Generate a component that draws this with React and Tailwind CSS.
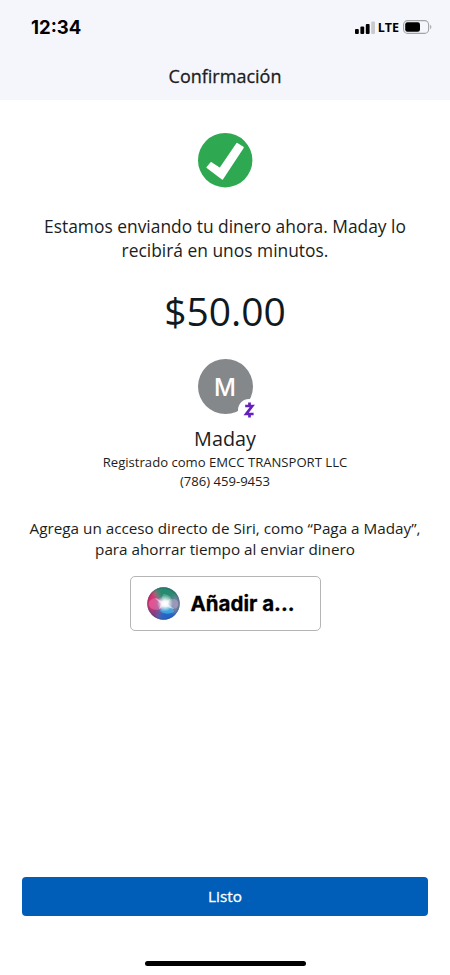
function Signal() {
  return (
    <svg className="h-[13px] w-5" viewBox="0 0 20 13">
      <rect x="0" y="8" width="3.8" height="5" rx="1" fill="#000" />
      <rect x="5.4" y="5.6" width="3.8" height="7.4" rx="1" fill="#000" />
      <rect x="10.8" y="3" width="3.8" height="10" rx="1" fill="#000" />
      <rect x="16.2" y="0.4" width="3.8" height="12.6" rx="1" fill="#c9cacd" />
    </svg>
  );
}

function Battery() {
  return (
    <svg className="h-[14px] w-[29px]" viewBox="0 0 29 14">
      <rect x="0.6" y="0.6" width="25" height="12.8" rx="4" fill="none" stroke="#a2a3a6" strokeWidth="1.1" />
      <rect x="2.2" y="2.2" width="14.8" height="9.6" rx="2.2" fill="#000" />
      <path d="M27.2 4.8c1.6.7 1.6 3.7 0 4.4z" fill="#a2a3a6" />
    </svg>
  );
}

function Success() {
  return (
    <svg className="h-[55px] w-[55px]" viewBox="0 0 55 55">
      <circle cx="27.2" cy="27.2" r="27.2" fill="#2fa951" />
      <path d="M9.2 34.4L13.2 29.8L22 35.6L39 10.6L45 14.5L24.4 45.8Z" fill="#fff" stroke="#fff" strokeWidth="1.6" strokeLinejoin="round" />
    </svg>
  );
}

function Zelle() {
  return (
    <svg className="absolute top-[40px] left-[40px] h-[22px] w-[22px]" viewBox="0 0 22 22">
      <circle cx="11" cy="11" r="11" fill="#fff" />
      <path d="M7.2 7H14.2L8.2 15H15.6M11.5 3.4V7M11.5 15V18.6" fill="none" stroke="#6420bd" strokeWidth="2.7" strokeLinejoin="miter" />
    </svg>
  );
}

function Siri() {
  return (
    <svg className="h-[33px] w-[33px] shrink-0" viewBox="0 0 33 33">
      <defs>
        <clipPath id="orb"><circle cx="16.5" cy="16.5" r="16.2" /></clipPath>
        <filter id="soft" x="-50%" y="-50%" width="200%" height="200%"><feGaussianBlur stdDeviation="2.6" /></filter>
        <filter id="edge" x="-30%" y="-30%" width="160%" height="160%"><feGaussianBlur stdDeviation="0.6" /></filter>
        <radialGradient id="glow">
          <stop offset="0" stopColor="#fff" />
          <stop offset="0.35" stopColor="#fff" stopOpacity="0.9" />
          <stop offset="1" stopColor="#fff" stopOpacity="0" />
        </radialGradient>
        <radialGradient id="rim">
          <stop offset="0.85" stopColor="#273055" stopOpacity="0" />
          <stop offset="1" stopColor="#273055" stopOpacity="0.3" />
        </radialGradient>
      </defs>
      <g clipPath="url(#orb)">
        <rect width="33" height="33" fill="#5b80a5" />
        <g filter="url(#soft)">
          <ellipse cx="20" cy="4" rx="14" ry="8" fill="#278a70" />
          <ellipse cx="3" cy="14" rx="7" ry="12" fill="#d62f70" />
          <ellipse cx="8" cy="27" rx="7" ry="6" fill="#8b3b7c" />
          <ellipse cx="20" cy="29" rx="10" ry="6" fill="#2065c6" />
          <ellipse cx="30" cy="17" rx="5" ry="8" fill="#7884a0" />
        </g>
        <g filter="url(#edge)">
          <ellipse cx="9.5" cy="17" rx="8" ry="6" fill="#f06daf" opacity="0.55" />
          <ellipse cx="26" cy="17" rx="5.5" ry="5" fill="#d5b6d9" opacity="0.4" />
          <path d="M16 17Q25 17 27 25Q19 29 13 24Z" fill="#43bdf0" opacity="0.65" />
          <path d="M17 17Q13 9 17 7Q25 8 25 15Z" fill="#7bc7af" opacity="0.5" />
          <path d="M8 11L17 15L23 12L21 17L27 22L17 19L12 22L14 17Z" fill="#fff" opacity="0.5" />
        </g>
        <circle cx="18" cy="16.5" r="8" fill="url(#glow)" />
        <circle cx="16.5" cy="16.5" r="16.3" fill="url(#rim)" />
      </g>
    </svg>
  );
}

export default function App() {
  return (
    <div className="flex h-[975px] w-[450px] flex-col overflow-hidden bg-white font-['Open_Sans','Noto_Sans',sans-serif] text-[#1b1d20]">
      <header className="h-[100px] shrink-0 bg-[#f5f6fb]">
        <div className="flex h-[54px] items-center justify-between pr-[18px] pl-[31px] text-black">
          <span className="font-['Inter',sans-serif] text-[18.5px] leading-6 font-bold">12:34</span>
          <div className="flex items-center">
            <Signal />
            <span className="mr-[4px] ml-[3px] pt-px text-[12.5px] leading-4 font-bold">LTE</span>
            <Battery />
          </div>
        </div>
        <h1 className="pt-[10px] text-center text-[18px] leading-6 [-webkit-text-stroke:0.3px_#1b1d20]">Confirmación</h1>
      </header>
      <main className="flex flex-col items-center whitespace-nowrap pt-[33px]">
        <Success />
        <p className="mt-[27px] text-center text-[17.4px] leading-[23.5px]">
          Estamos enviando tu dinero ahora. Maday lo<br />recibirá en unos minutos.
        </p>
        <p className="mt-[23px] text-[39px] leading-[52px] text-[#101820]">$50.00</p>
        <div className="relative mt-[22px] flex h-[55px] w-[55px] items-center justify-center rounded-full bg-[#85888b]">
          <span className="pt-[2px] font-['Inter',sans-serif] text-[24px] leading-none font-medium text-white">M</span>
          <Zelle />
        </div>
        <h2 className="mt-[11px] text-[19.8px] leading-7">Maday</h2>
        <p className="text-center text-[13.1px] leading-[19px]">
          Registrado como EMCC TRANSPORT LLC<br />(786) 459-9453
        </p>
        <p className="mt-[27px] text-center text-[15.25px] leading-[21px]">
          Agrega un acceso directo de Siri, como “Paga a Maday”,<br />para ahorrar tiempo al enviar dinero
        </p>
        <button className="mt-[16px] flex h-[55px] w-[191px] items-center rounded-[5px] border border-[#b5b5b5] pl-[16px] text-black">
          <Siri />
          <span className="ml-[11px] font-['Inter',sans-serif] text-[20.5px] leading-7 font-bold [-webkit-text-stroke:0.3px_#000]">Añadir a...</span>
        </button>
      </main>
      <footer className="mt-auto flex flex-col items-center px-[22px] pb-[9px]">
        <button className="h-[39px] w-full rounded-[4px] bg-[#005eb8] text-[15.3px] text-white [-webkit-text-stroke:0.3px_#fff]">Listo</button>
        <div className="mt-[45px] h-[5px] w-[161px] rounded-full bg-black" />
      </footer>
    </div>
  );
}
